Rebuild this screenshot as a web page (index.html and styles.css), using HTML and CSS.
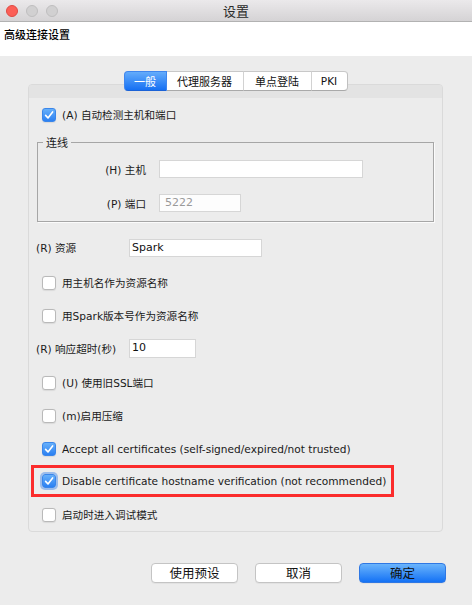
FILE: index.html
```html
<!DOCTYPE html>
<html lang="zh">
<head>
<meta charset="utf-8">
<title>设置</title>
<link rel="stylesheet" href="styles.css">
</head>
<body>
<div class="window">
  <div class="titlebar">
    <div class="lights">
      <span class="light red"></span>
      <span class="light"></span>
      <span class="light"></span>
    </div>
    <div class="title">设置</div>
    <div></div>
  </div>
  <div class="header">高级连接设置</div>
  <div class="main">
    <div class="tabs">
      <div class="tab sel w1">一般</div>
      <div class="tab w2">代理服务器</div>
      <div class="tab w3">单点登陆</div>
      <div class="tab w4">PKI</div>
    </div>
    <div class="panel">
      <div class="strip"></div>
      <div class="row">
        <span class="cb on"><svg viewBox="0 0 14 14"><path d="M3.6 7.4 L6 9.9 L10.6 3.9"/></svg></span>
        <span>(A) 自动检测主机和端口</span>
      </div>
      <fieldset class="group">
        <legend>连线</legend>
        <div class="frow">
          <span class="flabel">(H) 主机</span>
          <span class="field host"></span>
        </div>
        <div class="frow">
          <span class="flabel">(P) 端口</span>
          <span class="field port dim">5222</span>
        </div>
      </fieldset>
      <div class="row lrow first">
        <span class="llabel">(R) 资源</span>
        <span class="field res">Spark</span>
      </div>
      <div class="row gap2">
        <span class="cb"></span>
        <span>用主机名作为资源名称</span>
      </div>
      <div class="row">
        <span class="cb"></span>
        <span>用Spark版本号作为资源名称</span>
      </div>
      <div class="row lrow">
        <span class="llabel">(R) 响应超时(秒)</span>
        <span class="field timeout">10</span>
      </div>
      <div class="row gap1">
        <span class="cb"></span>
        <span>(U) 使用旧SSL端口</span>
      </div>
      <div class="row">
        <span class="cb"></span>
        <span>(m)启用压缩</span>
      </div>
      <div class="row">
        <span class="cb on"><svg viewBox="0 0 14 14"><path d="M3.6 7.4 L6 9.9 L10.6 3.9"/></svg></span>
        <span>Accept all certificates (self-signed/expired/not trusted)</span>
      </div>
      <div class="row boxed">
        <div class="redbox">
          <span class="cb on focus"><svg viewBox="0 0 14 14"><path d="M3.6 7.4 L6 9.9 L10.6 3.9"/></svg></span>
          <span>Disable certificate hostname verification (not recommended)</span>
        </div>
      </div>
      <div class="row">
        <span class="cb"></span>
        <span>启动时进入调试模式</span>
      </div>
    </div>
  </div>
  <div class="footer">
    <div class="btn">使用预设</div>
    <div class="btn">取消</div>
    <div class="btn primary">确定</div>
  </div>
</div>
</body>
</html>
```

FILE: styles.css
```css
html, body {
  margin: 0;
  padding: 0;
}
body {
  width: 472px;
  height: 605px;
  overflow: hidden;
  background: #ececec;
  font-family: "DejaVu Sans", "Noto Sans CJK SC", sans-serif;
  color: #111;
}
.window {
  width: 472px;
  height: 605px;
  background: #ececec;
}
.titlebar {
  height: 21px;
  border-bottom: 1px solid #b2b2b2;
  background: linear-gradient(#ebe9eb, #d5d3d5);
  display: grid;
  grid-template-columns: 1fr auto 1fr;
  align-items: center;
}
.lights {
  display: flex;
  gap: 8px;
  padding-left: 6px;
}
.light {
  width: 12px;
  height: 12px;
  box-sizing: border-box;
  border-radius: 50%;
  background: #d1d0d1;
  border: 1px solid #bfbebf;
}
.light.red {
  background: #fc5f57;
  border-color: #df4a44;
}
.title {
  font-family: "Noto Sans CJK SC", sans-serif;
  font-size: 13px;
  line-height: 16px;
  color: #2a2a2a;
}
.header {
  height: 29px;
  padding: 5px 0 0 4px;
  background: #fff;
  font-family: "Noto Sans CJK SC", sans-serif;
  font-size: 11px;
  line-height: 14px;
  font-weight: 500;
  color: #000;
}
.main {
  padding: 15px 29px 0 28px;
}
.tabs {
  display: flex;
  justify-content: center;
  height: 20px;
  margin-bottom: -7px;
  position: relative;
  z-index: 1;
}
.tab {
  box-sizing: border-box;
  height: 20px;
  background: #fff;
  border-top: 1px solid #c8c8c8;
  border-bottom: 1px solid #a9a9a9;
  border-right: 1px solid #d2d2d2;
  font-family: "Noto Sans CJK SC", sans-serif;
  font-size: 11px;
  line-height: 18px;
  text-align: center;
  color: #111;
}
.tab:first-child {
  border-radius: 4px 0 0 4px;
  border-left: 1px solid #c8c8c8;
}
.tab:last-child {
  border-radius: 0 4px 4px 0;
  border-right: 1px solid #c0c0c0;
}
.tab.sel {
  background: linear-gradient(#64acfb, #1670f3);
  border-color: #3f86ee;
  border-bottom-color: #1b62d6;
  color: #fff;
}
.tab.w1 { width: 43px; }
.tab.w2 { width: 77px; }
.tab.w3 { width: 68px; }
.tab.w4 { width: 36px; font-family: "DejaVu Sans", sans-serif; font-size: 10.5px; }
.panel {
  border: 1px solid #dadada;
  border-radius: 4px;
  background: #ececec;
  font-size: 10.6px;
  color: #1a1a1a;
}
.strip {
  height: 13px;
  background: #e3e3e3;
  border-radius: 3px 3px 0 0;
}
.row {
  display: flex;
  align-items: center;
  height: 33px;
  padding-left: 13px;
  white-space: nowrap;
}
.row.gap2 { margin-top: 2px; }
.row.gap1 { margin-top: 1px; }
.row.first { margin-top: 9px; }
.cb {
  width: 14px;
  height: 14px;
  box-sizing: border-box;
  border: 1px solid #b9b9b9;
  border-radius: 3px;
  background: #fff;
  margin-right: 6px;
  flex: none;
  box-shadow: 0 0.5px 1px rgba(0,0,0,0.08);
}
.cb svg {
  display: block;
  width: 14px;
  height: 14px;
  margin: -1px;
}
.cb svg path {
  fill: none;
  stroke: #fff;
  stroke-width: 1.6;
  stroke-linecap: round;
  stroke-linejoin: round;
}
.cb.on {
  background: linear-gradient(#67b0fa, #2b80f2);
  border-color: #3a86ea;
}
.cb.focus {
  box-shadow: 0 0 0 2px rgba(90,150,235,0.55);
}
.group {
  margin: 4px 8px 0 8px;
  padding: 3px 0 1px 0;
  border: 1px solid #a6a6a6;
  box-shadow: 1px 1px 0 #fbfbfb;
  min-width: 0;
}
.group legend {
  margin-left: 5px;
  padding: 0 3px;
  font-family: "Noto Sans CJK SC", sans-serif;
  font-size: 11px;
  line-height: 14px;
}
.frow {
  display: flex;
  align-items: center;
  height: 34px;
}
.flabel {
  width: 108px;
  text-align: right;
  margin-right: 13px;
  white-space: nowrap;
}
.field {
  box-sizing: border-box;
  height: 18px;
  background: #fff;
  border: 1px solid #d6d6d6;
  line-height: 16px;
  padding-left: 2px;
  font-size: 11px;
  color: #111;
}
.field.dim { color: #9a9a9a; padding-left: 5px; }
.field.host { width: 204px; }
.field.port { width: 82px; background: #fdfdfd; }
.field.res { width: 133px; }
.field.timeout { width: 67px; height: 19px; }
.lrow { padding-left: 7px; }
.llabel {
  width: 93px;
  flex: none;
}
.row.boxed {
  padding-left: 0;
  align-items: flex-start;
}
.redbox {
  box-sizing: border-box;
  height: 32px;
  margin-left: 2px;
  border: 3px solid #fb2c2c;
  display: flex;
  align-items: center;
  padding: 0 5px 0 8px;
}
.footer {
  display: flex;
  justify-content: flex-end;
  gap: 17px;
  padding: 31px 26px 0 0;
}
.btn {
  box-sizing: border-box;
  width: 87px;
  height: 20px;
  border: 1px solid #c4c4c4;
  border-radius: 4px;
  background: #fff;
  box-shadow: 0 1px 0 rgba(0,0,0,0.04);
  font-family: "Noto Sans CJK SC", sans-serif;
  font-size: 12.5px;
  line-height: 18px;
  text-align: center;
  color: #111;
}
.btn.primary {
  background: linear-gradient(#6ab4fc, #1472f5);
  border-color: #2f78e4;
}
```
